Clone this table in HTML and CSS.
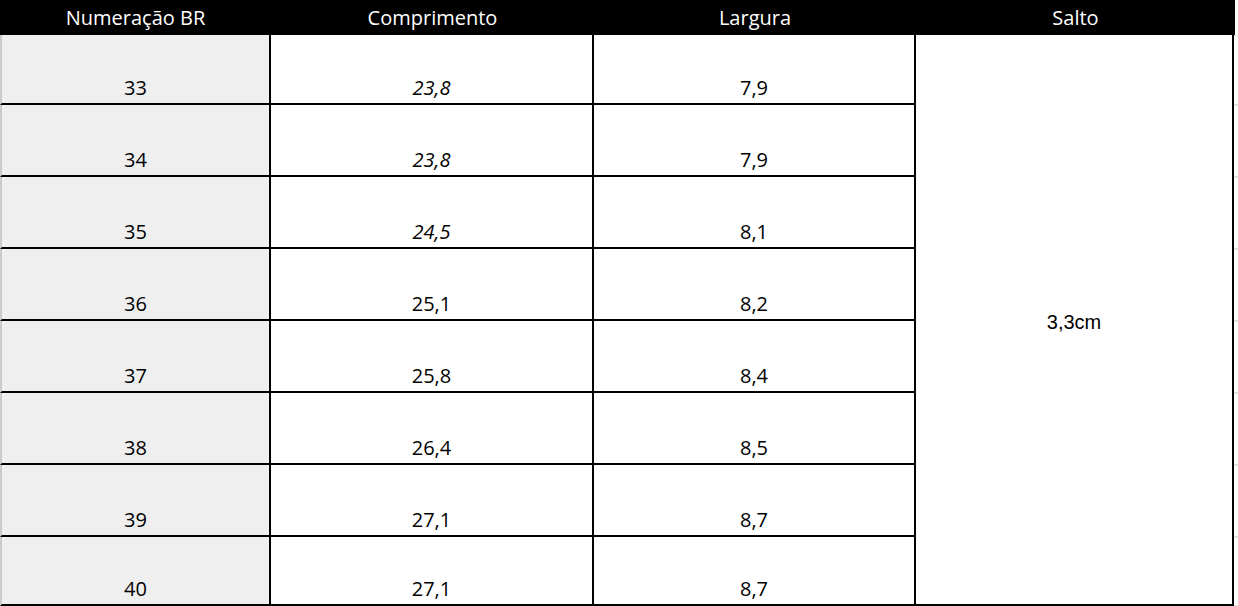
FILE: index.html
```html
<!DOCTYPE html>
<html lang="pt-BR">
<head>
<meta charset="utf-8">
<title>Tabela de medidas</title>
<link rel="stylesheet" href="styles.css">
</head>
<body>
<div class="sheet">
  <div class="th">Numeração BR</div>
  <div class="th">Comprimento</div>
  <div class="th">Largura</div>
  <div class="th">Salto</div>
  <div class="gut gut-head"></div>

  <div class="td num r1">33</div><div class="td r1"><i>23,8</i></div><div class="td r1">7,9</div>
  <div class="salto">3,3cm</div>
  <div class="gut r1"></div>

  <div class="td num">34</div><div class="td"><i>23,8</i></div><div class="td">7,9</div><div class="gut"></div>
  <div class="td num">35</div><div class="td"><i>24,5</i></div><div class="td">8,1</div><div class="gut"></div>
  <div class="td num">36</div><div class="td">25,1</div><div class="td">8,2</div><div class="gut"></div>
  <div class="td num">37</div><div class="td">25,8</div><div class="td">8,4</div><div class="gut"></div>
  <div class="td num">38</div><div class="td">26,4</div><div class="td">8,5</div><div class="gut"></div>
  <div class="td num">39</div><div class="td">27,1</div><div class="td">8,7</div><div class="gut"></div>
  <div class="td num">40</div><div class="td">27,1</div><div class="td">8,7</div><div class="gut"></div>
</div>
</body>
</html>
```

FILE: styles.css
```css
html, body {
  margin: 0;
  padding: 0;
  background: #ffffff;
  overflow: hidden;
}

.sheet {
  display: grid;
  grid-template-columns: 271px 323px 322px 318px 4px;
  grid-template-rows: 35px 70px 72px 72px 72px 72px 72px 72px 69px;
  width: 1238px;
  font-family: "Open Sans", "Noto Sans", sans-serif;
  font-size: 20px;
  color: #000000;
}

.th {
  background: #000000;
  color: #ffffff;
  display: flex;
  align-items: center;
  justify-content: center;
  padding-top: 1px;
  line-height: 24px;
  box-sizing: border-box;
}

.th:nth-child(4) {
  margin-right: -1px;
}

.gut {
  border-bottom: 2px solid #e3e3e3;
  box-sizing: border-box;
  margin-bottom: -1px;
}

.gut-head {
  margin-bottom: 0;
  border-bottom-width: 1px;
  height: 36px;
}

.td {
  display: flex;
  align-items: flex-end;
  justify-content: center;
  border-right: 2px solid #000000;
  border-bottom: 2px solid #000000;
  padding-bottom: 3px;
  line-height: 24px;
  box-sizing: border-box;
  background: #ffffff;
}

.td i {
  font-style: italic;
}

.num {
  background: #efefef;
  border-left: 2px solid #c9ccc9;
}

.salto {
  grid-column: 4;
  grid-row: 2 / span 8;
  display: flex;
  align-items: center;
  justify-content: center;
  border-right: 2px solid #000000;
  border-bottom: 2px solid #000000;
  box-sizing: border-box;
  padding-top: 5px;
  font-family: "Liberation Sans", Arial, sans-serif;
  font-size: 20px;
}
```
